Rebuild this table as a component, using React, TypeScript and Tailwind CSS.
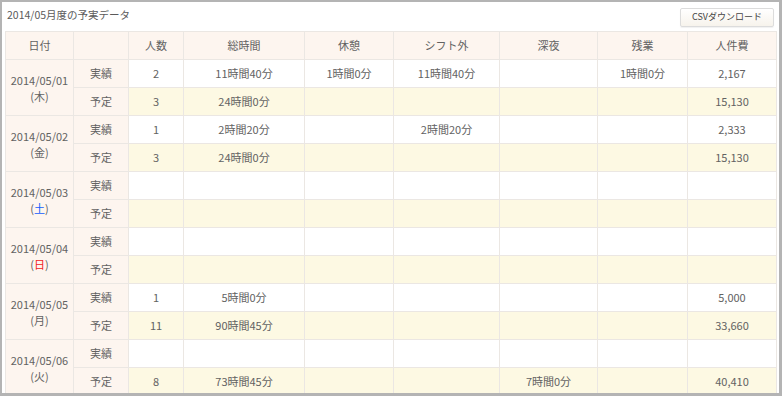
import React from "react";

type Row = {
	date: string;
	dow: string;
	dowColor?: string;
	actual: string[];
	plan: string[];
};

const rows: Row[] = [
	{
		date: "2014/05/01",
		dow: "木",
		actual: ["2", "11時間40分", "1時間0分", "11時間40分", "", "1時間0分", "2,167"],
		plan: ["3", "24時間0分", "", "", "", "", "15,130"],
	},
	{
		date: "2014/05/02",
		dow: "金",
		actual: ["1", "2時間20分", "", "2時間20分", "", "", "2,333"],
		plan: ["3", "24時間0分", "", "", "", "", "15,130"],
	},
	{
		date: "2014/05/03",
		dow: "土",
		dowColor: "text-blue-600",
		actual: ["", "", "", "", "", "", ""],
		plan: ["", "", "", "", "", "", ""],
	},
	{
		date: "2014/05/04",
		dow: "日",
		dowColor: "text-[#f02020]",
		actual: ["", "", "", "", "", "", ""],
		plan: ["", "", "", "", "", "", ""],
	},
	{
		date: "2014/05/05",
		dow: "月",
		actual: ["1", "5時間0分", "", "", "", "", "5,000"],
		plan: ["11", "90時間45分", "", "", "", "", "33,660"],
	},
	{
		date: "2014/05/06",
		dow: "火",
		actual: ["", "", "", "", "", "", ""],
		plan: ["8", "73時間45分", "", "", "7時間0分", "", "40,410"],
	},
];

const headers = ["日付", "", "人数", "総時間", "休憩", "シフト外", "深夜", "残業", "人件費"];
const widths = [68, 55, 55, 121, 89, 106, 98, 90, 89];

const cell = "border border-[#ebe7e3] h-[28px] p-0 text-center align-middle";

export default function App() {
	return (
		<div className="w-[782px] h-[396px] bg-white border-l-2 border-t-2 border-r-[3px] border-b-[3px] border-[#b4b4b4] text-[#626262] text-[11px] font-['Noto_Sans_CJK_JP','Noto_Sans',sans-serif] overflow-hidden">
			<div className="flex items-center justify-between h-[29px] pl-[5px] pr-[5px]">
				<span className="text-[10.5px] text-[#5a5a5a] -mt-[3px]">2014/05月度の予実データ</span>
				<button className="w-[94px] h-[19px] mt-[1px] rounded-[2px] border border-[#dcdcdc] bg-gradient-to-b from-white to-[#f7f3ec] text-[9px] text-[#444] shadow-[0_1px_1px_rgba(0,0,0,0.06)]">
					CSVダウンロード
				</button>
			</div>
			<div className="pl-[3px]">
				<table className="table-fixed border-collapse w-[771px]">
					<colgroup>
						{widths.map((w, i) => (
							<col key={i} style={{ width: w }} />
						))}
					</colgroup>
					<thead>
						<tr className="bg-[#fdf5ef]">
							{headers.map((h, i) => (
								<th key={i} className={`${cell} font-normal`}>
									{h}
								</th>
							))}
						</tr>
					</thead>
					<tbody>
						{rows.map((r) => (
							<React.Fragment key={r.date}>
								<tr>
									<td rowSpan={2} className={`${cell} bg-[#fdf5ef] leading-[16px]`}>
										<div>{r.date}</div>
										<div>
											(<span className={r.dowColor}>{r.dow}</span>)
										</div>
									</td>
									<td className={`${cell} bg-[#fdf5ef]`}>実績</td>
									{r.actual.map((v, i) => (
										<td key={i} className={`${cell} bg-white`}>
											{v}
										</td>
									))}
								</tr>
								<tr>
									<td className={`${cell} bg-[#fdf5ef]`}>予定</td>
									{r.plan.map((v, i) => (
										<td key={i} className={`${cell} bg-[#fdf9e3]`}>
											{v}
										</td>
									))}
								</tr>
							</React.Fragment>
						))}
					</tbody>
				</table>
			</div>
		</div>
	);
}
